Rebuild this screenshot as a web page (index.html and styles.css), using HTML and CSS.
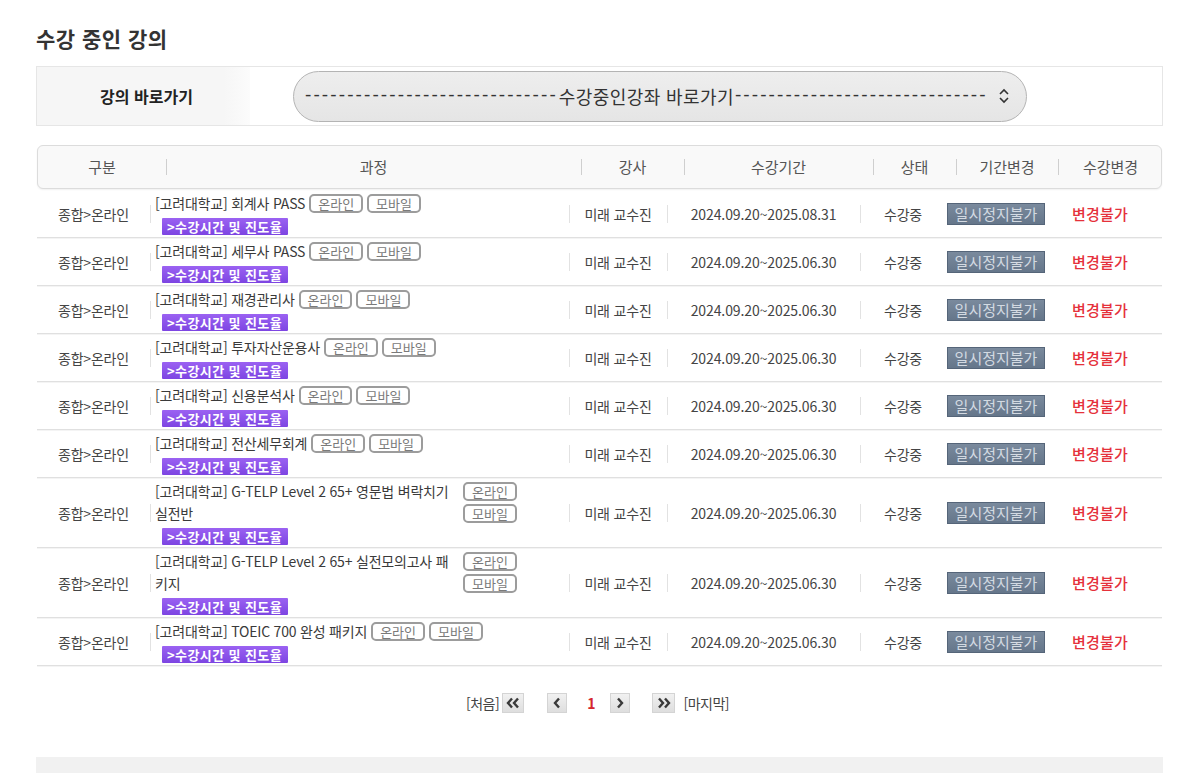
FILE: index.html
```html
<!DOCTYPE html>
<html lang="ko">
<head>
<meta charset="utf-8">
<title>수강 중인 강의</title>
<link rel="stylesheet" href="styles.css">
</head>
<body>
<div class="page">
  <h2 class="title">수강 중인 강의</h2>

  <div class="shortcut">
    <div class="shortcut-label">강의 바로가기</div>
    <div class="shortcut-field">
      <div class="select">
        <span class="dashes">------------------------------</span><span class="select-text">수강중인강좌 바로가기</span><span class="dashes">------------------------------</span>
        <svg class="select-arrow" width="12" height="16" viewBox="0 0 12 16"><polyline points="2,6 6,2 10,6" fill="none" stroke="#333" stroke-width="1.6"/><polyline points="2,10 6,14 10,10" fill="none" stroke="#333" stroke-width="1.6"/></svg>
      </div>
    </div>
  </div>

  <div class="thead">
    <div class="th">구분</div>
    <div class="th sep">과정</div>
    <div class="th sep">강사</div>
    <div class="th sep">수강기간</div>
    <div class="th sep">상태</div>
    <div class="th sep">기간변경</div>
    <div class="th sep">수강변경</div>
  </div>

  <div class="tbody">
    <div class="row">
      <div class="td">종합&gt;온라인</div>
      <div class="td course sep"><div class="course-inner"><div class="course-line"><span class="course-name">[고려대학교] 회계사 PASS</span><span class="badges"><span class="badge">온라인</span><span class="badge">모바일</span></span></div><span class="progress">&gt;수강시간 및 진도율</span></div></div>
      <div class="td sep">미래 교수진</div>
      <div class="td date sep">2024.09.20~2025.08.31</div>
      <div class="td sep">수강중</div>
      <div class="td"><span class="pause">일시정지불가</span></div>
      <div class="td last"><span class="nochange">변경불가</span></div>
    </div>
    <div class="row">
      <div class="td">종합&gt;온라인</div>
      <div class="td course sep"><div class="course-inner"><div class="course-line"><span class="course-name">[고려대학교] 세무사 PASS</span><span class="badges"><span class="badge">온라인</span><span class="badge">모바일</span></span></div><span class="progress">&gt;수강시간 및 진도율</span></div></div>
      <div class="td sep">미래 교수진</div>
      <div class="td date sep">2024.09.20~2025.06.30</div>
      <div class="td sep">수강중</div>
      <div class="td"><span class="pause">일시정지불가</span></div>
      <div class="td last"><span class="nochange">변경불가</span></div>
    </div>
    <div class="row">
      <div class="td">종합&gt;온라인</div>
      <div class="td course sep"><div class="course-inner"><div class="course-line"><span class="course-name">[고려대학교] 재경관리사</span><span class="badges"><span class="badge">온라인</span><span class="badge">모바일</span></span></div><span class="progress">&gt;수강시간 및 진도율</span></div></div>
      <div class="td sep">미래 교수진</div>
      <div class="td date sep">2024.09.20~2025.06.30</div>
      <div class="td sep">수강중</div>
      <div class="td"><span class="pause">일시정지불가</span></div>
      <div class="td last"><span class="nochange">변경불가</span></div>
    </div>
    <div class="row">
      <div class="td">종합&gt;온라인</div>
      <div class="td course sep"><div class="course-inner"><div class="course-line"><span class="course-name">[고려대학교] 투자자산운용사</span><span class="badges"><span class="badge">온라인</span><span class="badge">모바일</span></span></div><span class="progress">&gt;수강시간 및 진도율</span></div></div>
      <div class="td sep">미래 교수진</div>
      <div class="td date sep">2024.09.20~2025.06.30</div>
      <div class="td sep">수강중</div>
      <div class="td"><span class="pause">일시정지불가</span></div>
      <div class="td last"><span class="nochange">변경불가</span></div>
    </div>
    <div class="row">
      <div class="td">종합&gt;온라인</div>
      <div class="td course sep"><div class="course-inner"><div class="course-line"><span class="course-name">[고려대학교] 신용분석사</span><span class="badges"><span class="badge">온라인</span><span class="badge">모바일</span></span></div><span class="progress">&gt;수강시간 및 진도율</span></div></div>
      <div class="td sep">미래 교수진</div>
      <div class="td date sep">2024.09.20~2025.06.30</div>
      <div class="td sep">수강중</div>
      <div class="td"><span class="pause">일시정지불가</span></div>
      <div class="td last"><span class="nochange">변경불가</span></div>
    </div>
    <div class="row">
      <div class="td">종합&gt;온라인</div>
      <div class="td course sep"><div class="course-inner"><div class="course-line"><span class="course-name">[고려대학교] 전산세무회계</span><span class="badges"><span class="badge">온라인</span><span class="badge">모바일</span></span></div><span class="progress">&gt;수강시간 및 진도율</span></div></div>
      <div class="td sep">미래 교수진</div>
      <div class="td date sep">2024.09.20~2025.06.30</div>
      <div class="td sep">수강중</div>
      <div class="td"><span class="pause">일시정지불가</span></div>
      <div class="td last"><span class="nochange">변경불가</span></div>
    </div>
    <div class="row">
      <div class="td">종합&gt;온라인</div>
      <div class="td course sep"><div class="course-inner"><div class="course-line"><span class="course-name">[고려대학교] G-TELP Level 2 65+ 영문법 벼락치기 실전반</span><span class="badges"><span class="badge">온라인</span><span class="badge">모바일</span></span></div><span class="progress">&gt;수강시간 및 진도율</span></div></div>
      <div class="td sep">미래 교수진</div>
      <div class="td date sep">2024.09.20~2025.06.30</div>
      <div class="td sep">수강중</div>
      <div class="td"><span class="pause">일시정지불가</span></div>
      <div class="td last"><span class="nochange">변경불가</span></div>
    </div>
    <div class="row">
      <div class="td">종합&gt;온라인</div>
      <div class="td course sep"><div class="course-inner"><div class="course-line"><span class="course-name">[고려대학교] G-TELP Level 2 65+ 실전모의고사 패키지</span><span class="badges"><span class="badge">온라인</span><span class="badge">모바일</span></span></div><span class="progress">&gt;수강시간 및 진도율</span></div></div>
      <div class="td sep">미래 교수진</div>
      <div class="td date sep">2024.09.20~2025.06.30</div>
      <div class="td sep">수강중</div>
      <div class="td"><span class="pause">일시정지불가</span></div>
      <div class="td last"><span class="nochange">변경불가</span></div>
    </div>
    <div class="row">
      <div class="td">종합&gt;온라인</div>
      <div class="td course sep"><div class="course-inner"><div class="course-line"><span class="course-name">[고려대학교] TOEIC 700 완성 패키지</span><span class="badges"><span class="badge">온라인</span><span class="badge">모바일</span></span></div><span class="progress">&gt;수강시간 및 진도율</span></div></div>
      <div class="td sep">미래 교수진</div>
      <div class="td date sep">2024.09.20~2025.06.30</div>
      <div class="td sep">수강중</div>
      <div class="td"><span class="pause">일시정지불가</span></div>
      <div class="td last"><span class="nochange">변경불가</span></div>
    </div>
  </div>

  <div class="pager">
    <span class="pg-text">[처음]</span>
    <span class="pg-btn first"><svg width="14" height="12" viewBox="0 0 14 12"><polyline points="6,1.5 2,6 6,10.5" fill="none" stroke="#3a3a3a" stroke-width="2.4"/><polyline points="12,1.5 8,6 12,10.5" fill="none" stroke="#3a3a3a" stroke-width="2.4"/></svg></span>
    <span class="pg-btn prev"><svg width="10" height="12" viewBox="0 0 10 12"><polyline points="7,1.5 3,6 7,10.5" fill="none" stroke="#3a3a3a" stroke-width="2.4"/></svg></span>
    <span class="pg-cur">1</span>
    <span class="pg-btn next"><svg width="10" height="12" viewBox="0 0 10 12"><polyline points="3,1.5 7,6 3,10.5" fill="none" stroke="#3a3a3a" stroke-width="2.4"/></svg></span>
    <span class="pg-btn last"><svg width="14" height="12" viewBox="0 0 14 12"><polyline points="2,1.5 6,6 2,10.5" fill="none" stroke="#3a3a3a" stroke-width="2.4"/><polyline points="8,1.5 12,6 8,10.5" fill="none" stroke="#3a3a3a" stroke-width="2.4"/></svg></span>
    <span class="pg-text end">[마지막]</span>
  </div>

  <div class="bottom-bar"></div>
</div>
</body>
</html>
```

FILE: styles.css
```css
* { box-sizing: border-box; }
html, body { margin: 0; padding: 0; background: #fff; }
body {
  font-family: "Noto Sans CJK KR", "Noto Sans", sans-serif;
  color: #444;
  font-size: 14px;
}
.page {
  width: 1127px;
  margin-left: 36px;
  padding-top: 24px;
}
.title {
  margin: 0;
  font-size: 21px;
  line-height: 28px;
  font-weight: 700;
  color: #333;
  letter-spacing: 0.5px;
}

/* shortcut box */
.shortcut {
  margin-top: 14px;
  height: 60px;
  border: 1px solid #e6e6e6;
  display: flex;
  align-items: stretch;
}
.shortcut-label {
  width: 213px;
  background: linear-gradient(to right, #f6f6f6 88%, #fcfcfc);
  display: flex;
  align-items: center;
  justify-content: center;
  font-size: 16px;
  font-weight: 700;
  color: #222;
  padding-left: 6px;
}
.shortcut-field {
  flex: 1;
  display: flex;
  align-items: center;
  padding-left: 43px;
}
.select {
  width: 734px;
  height: 51px;
  border: 1px solid #b4b4b4;
  border-radius: 26px;
  background: linear-gradient(#eeeeee, #e5e5e5);
  display: flex;
  align-items: center;
  padding-left: 11px;
  font-size: 18px;
  color: #333;
  white-space: nowrap;
}
.dashes {
  font-family: "Liberation Sans", sans-serif;
  font-size: 19px;
  letter-spacing: 2.1px;
  color: #333;
  position: relative;
  top: -1px;
}
.select-text { letter-spacing: 0.4px; margin: 0 1px; }
.select-arrow { margin-left: 10px; }

/* table header */
.thead {
  margin: 19px 1px 0;
  height: 44px;
  border: 1px solid #dcdcdc;
  border-radius: 6px;
  background: #f9f9f9;
  box-shadow: 0 1px 2px rgba(0,0,0,0.06);
  display: grid;
  grid-template-columns: 128px 415px 103px 189px 83px 102px 105px;
  align-items: center;
}
.th {
  position: relative;
  text-align: center;
  font-size: 15px;
  color: #555;
  line-height: 20px;
}
.th.sep::before {
  content: "";
  position: absolute;
  left: 0;
  top: 2px;
  width: 1px;
  height: 16px;
  background: #cfcfcf;
}

/* table body */
.tbody { margin: 1px 1px 0; }
.row {
  display: grid;
  grid-template-columns: 113px 419px 98px 193px 86px 100px 116px;
  align-items: center;
  min-height: 48px;
  border-bottom: 1px solid #e0e0e0;
  box-shadow: 0 1px 0 #f4f4f4;
  padding: 2px 0;
}
.td {
  position: relative;
  text-align: center;
  line-height: 22px;
  letter-spacing: -0.2px;
  color: #444;
}
.td.last { padding-right: 8px; }
.td.sep::before {
  content: "";
  position: absolute;
  left: 0;
  top: 50%;
  margin-top: -9px;
  width: 1px;
  height: 18px;
  background: #e2e2e2;
}
.td.course { text-align: left; padding-left: 5px; }
.course-inner { display: flex; flex-direction: column; align-items: flex-start; }
.course-line {
  display: flex;
  align-items: flex-start;
  gap: 4px;
  max-width: 362px;
}
.course-name { flex: 0 1 auto; color: #3a3a3a; letter-spacing: -0.2px; }
.badges {
  flex: 0 1000 auto;
  display: flex;
  flex-wrap: wrap;
  gap: 3px 4px;
  padding-top: 2px;
}
.badge {
  display: inline-block;
  height: 19px;
  line-height: 15px;
  padding: 0 7px;
  border: 2px solid #9c9c9c;
  border-radius: 5px;
  font-size: 13px;
  color: #7a7a7a;
  letter-spacing: 0;
  white-space: nowrap;
}
.progress {
  margin: 4px 0 0 7px;
  display: inline-block;
  height: 17px;
  line-height: 17px;
  padding: 0 6px 0 5px;
  background: linear-gradient(#9b62f2, #7d45e2);
  color: #fff;
  font-size: 13px;
  font-weight: 700;
  letter-spacing: 0.4px;
  border-radius: 1px;
}
.date { letter-spacing: -0.1px; }
.pause {
  display: inline-block;
  width: 98px;
  height: 22px;
  line-height: 20px;
  border: 1px solid #556579;
  background: linear-gradient(#7a8a9d, #65768a);
  color: #d3dae2;
  font-size: 15px;
  letter-spacing: 0;
}
.nochange {
  color: #e5313b;
  font-size: 15px;
  font-weight: 500;
  letter-spacing: 0.2px;
}

/* pager */
.pager {
  margin-top: 26px;
  display: flex;
  justify-content: center;
  align-items: center;
  height: 22px;
  padding-right: 4px;
}
.pg-text { font-size: 14px; color: #444; letter-spacing: -0.5px; line-height: 20px; }
.pg-btn {
  display: inline-flex;
  align-items: center;
  justify-content: center;
  width: 20px;
  height: 20px;
  background: linear-gradient(#f1f1f1, #dedede);
  border: 1px solid #d4d4d4;
}
.pg-btn.first { margin-left: 3px; width: 22px; }
.pg-btn.prev { margin-left: 23px; }
.pg-cur { margin: 0 15px 0 20px; color: #d5262e; font-weight: 700; font-size: 14px; line-height: 20px; }
.pg-btn.last { margin-left: 22px; width: 23px; }
.pg-text.end { margin-left: 8px; }

.bottom-bar {
  margin-top: 43px;
  height: 20px;
  background: #f1f1f1;
}
```
